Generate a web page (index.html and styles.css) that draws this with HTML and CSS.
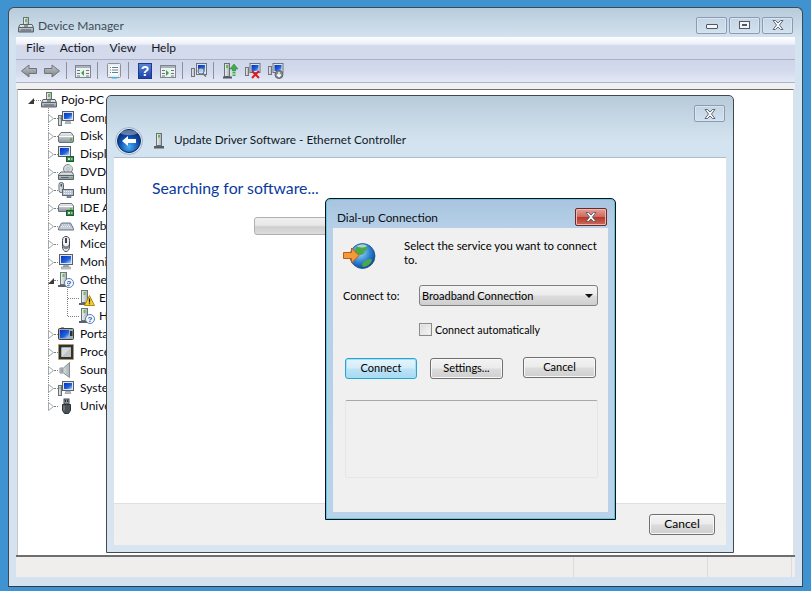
FILE: index.html
```html
<!DOCTYPE html>
<html lang="en">
<head>
<meta charset="utf-8">
<title>Device Manager</title>
<link rel="stylesheet" href="styles.css">
</head>
<body>
<svg class="defs" width="0" height="0" aria-hidden="true">
  <defs>
    <linearGradient id="gTower" x1="0" x2="1" y1="0" y2="0"><stop offset="0" stop-color="#f2f4f4"/><stop offset="1" stop-color="#a8b0b4"/></linearGradient>
    <linearGradient id="gBox" x1="0" x2="0" y1="0" y2="1"><stop offset="0" stop-color="#eef1f3"/><stop offset="1" stop-color="#8b949b"/></linearGradient>
    <linearGradient id="gScreen" x1="0" x2="1" y1="0" y2="1"><stop offset="0" stop-color="#0a2fb8"/><stop offset=".6" stop-color="#1c62e0"/><stop offset="1" stop-color="#bcd8f6"/></linearGradient>
    <linearGradient id="gArrow" x1="0" x2="0" y1="0" y2="1"><stop offset="0" stop-color="#c4c8cc"/><stop offset="1" stop-color="#7d8286"/></linearGradient>
    <linearGradient id="gHelp" x1="0" x2="0" y1="0" y2="1"><stop offset="0" stop-color="#5b86d8"/><stop offset="1" stop-color="#1c3fa4"/></linearGradient>
    <radialGradient id="gBack" cx=".5" cy=".75" r=".75"><stop offset="0" stop-color="#49b0f2"/><stop offset=".55" stop-color="#0d4fb0"/><stop offset="1" stop-color="#06275f"/></radialGradient>
    <radialGradient id="gGlobe" cx=".4" cy=".35" r=".7"><stop offset="0" stop-color="#a6d8f6"/><stop offset=".6" stop-color="#2a7fd0"/><stop offset="1" stop-color="#0d3f8c"/></radialGradient>

    <symbol id="twist-closed" viewBox="0 0 6 9"><path d="M.5.5l5 4-5 4z" fill="#fff" stroke="#a2a7ac"/></symbol>
    <symbol id="twist-opened" viewBox="0 0 6 9"><path d="M6 2v6H0z" fill="#3a3a3a"/></symbol>
    <symbol id="i-tower" viewBox="0 0 16 16"><rect x="5.500" y=".5" width="5" height="9" fill="url(#gTower)" stroke="#6a7378"/><rect x="7" y="2" width="2" height="3" fill="#6ac04a"/></symbol>
    <symbol id="i-root" viewBox="0 0 16 16"><use href="#i-tower"/><path d="M2 7.500h12l1.500 3v4.500h-15v-4.500z" fill="url(#gBox)" stroke="#59636b"/><path d="M1 10.500h14" stroke="#59636b"/><rect x="6" y="8.500" width="4" height="1" fill="#444c52"/><rect x="3" y="12.500" width="10" height="1" fill="#59636b"/></symbol>
    <symbol id="i-monitor" viewBox="0 0 16 16"><rect x="1.500" y=".5" width="13" height="10" fill="#dfe5ea" stroke="#56606a"/><rect x="3" y="2" width="10" height="7" fill="url(#gScreen)"/><path d="M6 11h4l1 2H5z" fill="#aeb6bc" stroke="#76808a" stroke-width=".5"/><rect x="3.500" y="13" width="9" height="2" fill="#c8ced3" stroke="#76808a" stroke-width=".5"/></symbol>
    <symbol id="i-computer" viewBox="0 0 16 16"><rect x=".5" y="5.500" width="3" height="10" fill="url(#gTower)" stroke="#687075"/><rect x="1.500" y="7" width="1" height="2" fill="#62b842"/><rect x="4.500" y="1.500" width="11" height="9" fill="#dfe5ea" stroke="#56606a"/><rect x="6" y="3" width="8" height="6" fill="url(#gScreen)"/><path d="M8 11h4l1 2.500H7z" fill="#b6bdc3" stroke="#76808a" stroke-width=".5"/></symbol>
    <symbol id="i-disk" viewBox="0 0 16 16"><path d="M3 4.500h10l2.500 3.500v5a1.500 1.500 0 0 1-1.500 1.500H2A1.500 1.500 0 0 1 .5 13V8z" fill="url(#gBox)" stroke="#6a737a"/><path d="M1 8.500h14" stroke="#fff"/><rect x="12" y="10" width="2" height="3" fill="#5cb53f"/></symbol>
    <symbol id="i-card" viewBox="0 0 16 16"><rect x="8.500" y="10.500" width="7" height="5" fill="#2f8a4a" stroke="#1d5a32"/><rect x="10" y="12" width="2" height="2" fill="#d8e0c8"/><rect x="13" y="12" width="1.500" height="2" fill="#a0c0a0"/></symbol>
    <symbol id="i-display" viewBox="0 0 16 16"><rect x=".5" y=".5" width="12" height="10" fill="#dfe5ea" stroke="#56606a"/><rect x="2" y="2" width="9" height="7" fill="url(#gScreen)"/><use href="#i-card"/></symbol>
    <symbol id="i-dvd" viewBox="0 0 16 16"><circle cx="10" cy="5" r="4.500" fill="#d4dce2" stroke="#7a848c"/><circle cx="10" cy="5" r="1.300" fill="#fff" stroke="#7a848c" stroke-width=".6"/><path d="M10 .5a4.500 4.500 0 0 1 4.500 4.500h-3z" fill="#bfe0c4"/><path d="M3 8h11l1.500 2.500v5H.5v-5z" fill="url(#gBox)" stroke="#59636b"/><path d="M1 11.500h14" stroke="#59636b"/><rect x="3" y="13" width="8" height="1" fill="#59636b"/><rect x="12.500" y="13" width="2" height="1" fill="#5cb53f"/></symbol>
    <symbol id="i-hid" viewBox="0 0 16 16"><rect x="1" y=".5" width="4.500" height="10" rx="2" fill="url(#gTower)" stroke="#5c666c"/><rect x="2.500" y="2" width="1.500" height="2.500" fill="#4a555c"/><rect x="4.500" y="7.500" width="11" height="6" fill="#b9c2d0" stroke="#5c666c"/><path d="M6 9.500h8M6 11.500h8" stroke="#eef1f5" stroke-dasharray="1 1"/><path d="M9 13.500h4v2.500h-4z" fill="#7c8fb0" stroke="#4c5e80" stroke-width=".5"/></symbol>
    <symbol id="i-ide" viewBox="0 0 16 16"><path d="M2.500 3.500h11l2 2.500v5.500H.5V6z" fill="url(#gBox)" stroke="#6a737a"/><path d="M1 6.500h14" stroke="#fff"/><rect x="12" y="8" width="2" height="2" fill="#5cb53f"/><use href="#i-card"/></symbol>
    <symbol id="i-keyboard" viewBox="0 0 16 16"><path d="M3.500 5h9l3 5.500v1.500H.5v-1.500z" fill="#b8c0ce" stroke="#6c7686"/><path d="M4 7h8M3 8.500h10M2.500 10h11" stroke="#f0f3f7" stroke-dasharray="1 1"/></symbol>
    <symbol id="i-mouse" viewBox="0 0 16 16"><path d="M4.500 4.500c0-3 1.500-4 3.500-4s3.500 1 3.500 4v6c0 3-1.500 5-3.500 5s-3.500-2-3.500-5z" fill="#eff1f3" stroke="#3e464c"/><path d="M7 2h2v5H7z" fill="#3e464c"/><path d="M5 8c1 3 5 3 6 0v3c-.5 3-5.500 3-6 0z" fill="#7e878e"/></symbol>
    <symbol id="i-q" viewBox="0 0 16 16"><rect x="2.500" y=".5" width="6" height="12" fill="url(#gTower)" stroke="#6a7378"/><rect x="4.500" y="2" width="2" height="3" fill="#6ac04a"/><rect x="0" y="13" width="9" height="2" fill="#59636b"/><circle cx="11" cy="11" r="4.500" fill="#f4f8fc" stroke="#5980b8"/><text x="11" y="14" class="qmark">?</text></symbol>
    <symbol id="i-warn" viewBox="0 0 16 16"><rect x="2.500" y=".5" width="6" height="12" fill="url(#gTower)" stroke="#6a7378"/><rect x="4.500" y="2" width="2" height="3" fill="#6ac04a"/><rect x="0" y="13" width="9" height="2" fill="#59636b"/><path d="M10.500 5.500l5 10h-10z" fill="#f6cf2c" stroke="#b08a10" stroke-linejoin="round"/><path d="M10.500 8.500v4M10.500 13.300v1" stroke="#222" stroke-width="1.200"/></symbol>
    <symbol id="i-portable" viewBox="0 0 16 16"><rect x=".5" y="2.500" width="15" height="11" rx="1" fill="#a5acb2" stroke="#38414a"/><rect x="2" y="4" width="9" height="8" fill="url(#gScreen)"/><rect x="12" y="5" width="2.500" height="5" fill="#2a3038"/><rect x="3" y="1.500" width="3" height="1" fill="#38414a"/></symbol>
    <symbol id="i-processor" viewBox="0 0 16 16"><rect x=".5" y=".5" width="15" height="15" fill="#2e3236" stroke="#c99a3c" stroke-dasharray="1 1"/><rect x="1" y="1" width="14" height="14" rx="1" fill="#2e3236"/><rect x="3.500" y="3.500" width="9.500" height="9.500" fill="#bfc3c6"/><path d="M3.500 3.500H13L3.500 13z" fill="#d8dbdd"/></symbol>
    <symbol id="i-sound" viewBox="0 0 16 16"><path d="M2 6h3.500L11.500.5v15L5.500 11H2z" fill="url(#gTower)" stroke="#858d93"/><path d="M2.500 6.500h3v4h-3z" fill="#9aa2a8"/></symbol>
    <symbol id="i-usb" viewBox="0 0 16 16"><rect x="6" y="1" width="5" height="5" fill="#8e959b" stroke="#40474c"/><path d="M7.500 2v2M9.500 2v2" stroke="#2e3236"/><path d="M4.500 6.500h8v6l-2 3h-4l-2-3z" fill="#4a5157" stroke="#2c3236"/><path d="M6 7.500v5" stroke="#8e959b"/></symbol>

    <symbol id="t-left" viewBox="0 0 16 16"><path d="M.5 8L8 2v3.500h7.500v5H8V14z" fill="url(#gArrow)" stroke="#707478"/></symbol>
    <symbol id="t-right" viewBox="0 0 16 16"><path d="M15.500 8L8 2v3.500H.5v5H8V14z" fill="url(#gArrow)" stroke="#707478"/></symbol>
    <symbol id="t-win-left" viewBox="0 0 16 16"><rect x=".5" y="2.500" width="15" height="12" fill="#eef1f4" stroke="#7e878e"/><rect x="1" y="3" width="14" height="2" fill="#a8b0b8"/><path d="M2 7h3v1H2zM2 10h3v1H2zM2 12.500h3v1H2zM11 7h3v1h-3zM11 10h3v1h-3zM11 12.500h3v1h-3z" fill="#6f7880"/><path d="M9 7v6l-3-3z" fill="#3da640"/></symbol>
    <symbol id="t-win-right" viewBox="0 0 16 16"><rect x=".5" y="2.500" width="15" height="12" fill="#eef1f4" stroke="#7e878e"/><rect x="1" y="3" width="14" height="2" fill="#a8b0b8"/><path d="M2 7h3v1H2zM2 10h3v1H2zM2 12.500h3v1H2zM11 7h3v1h-3zM11 10h3v1h-3zM11 12.500h3v1h-3z" fill="#6f7880"/><path d="M6 7v6l3-3z" fill="#3da640"/></symbol>
    <symbol id="t-props" viewBox="0 0 16 16"><rect x="1.500" y=".5" width="13" height="14" rx="1" fill="#f6f7f8" stroke="#8a9298"/><rect x="3" y="2" width="10" height="11" fill="#fff" stroke="#c0c6ca" stroke-width=".5"/><path d="M4 4h1v1H4zM6 4h6v1H6zM4 6.500h1v1H4zM6 6.500h6v1H6zM4 9h1v1H4zM6 9h6v1H6z" fill="#5b7f9e"/><rect x="6" y="14" width="5" height="1.500" fill="#3fb0e8"/></symbol>
    <symbol id="t-help" viewBox="0 0 14 16"><rect x=".5" y=".5" width="13" height="15" fill="url(#gHelp)" stroke="#1c3a90"/><text x="7" y="13" class="helpmark">?</text></symbol>
    <symbol id="t-scan" viewBox="0 0 16 16"><rect x=".5" y="5.500" width="3" height="8" fill="url(#gTower)" stroke="#70787e"/><rect x="5.500" y=".5" width="10" height="11" fill="#dfe5ea" stroke="#6b747c"/><rect x="7" y="2" width="7" height="7" fill="url(#gScreen)"/><circle cx="10" cy="8" r="3" fill="#cfe4f6" fill-opacity=".8" stroke="#68717a"/><path d="M12 10.500l3 3" stroke="#68717a" stroke-width="1.500"/></symbol>
    <symbol id="t-update" viewBox="0 0 16 16"><rect x="2.500" y=".5" width="5" height="13" fill="url(#gTower)" stroke="#667076"/><rect x="4" y="2" width="2" height="3" fill="#62b842"/><rect x="1" y="13.500" width="9" height="2" fill="#50595f"/><path d="M12 1l4 5h-2.500v2h-3V6H8z" fill="#41ad4a" stroke="#1f7a2a" stroke-width=".5"/><path d="M10.500 9h3v1.500h-3zM10.500 11.500h3V13h-3z" fill="#41ad4a"/></symbol>
    <symbol id="t-remove" viewBox="0 0 16 16"><rect x=".5" y="4.500" width="3" height="8" fill="url(#gTower)" stroke="#70787e"/><rect x="5" y=".5" width="10" height="9" fill="#dfe5ea" stroke="#6b747c"/><rect x="6.500" y="2" width="7" height="6" fill="url(#gScreen)"/><path d="M7 8l7 7M14 8l-7 7" stroke="#d81e1e" stroke-width="2"/></symbol>
    <symbol id="t-add" viewBox="0 0 16 16"><rect x=".5" y="3.500" width="3" height="8" fill="url(#gTower)" stroke="#70787e"/><rect x="5" y=".5" width="10" height="9" fill="#dfe5ea" stroke="#6b747c"/><rect x="6.500" y="2" width="7" height="6" fill="url(#gScreen)"/><circle cx="11" cy="11.500" r="4" fill="#868d93" stroke="#5c6368"/><path d="M11 9v4M9 11.500l2 2 2-2" stroke="#fff" stroke-width="1.300" fill="none"/></symbol>
    <symbol id="x-glyph" viewBox="0 0 12 10"><path d="M1 .5h2.500L6 3l2.500-2.500H11L7.500 5 11 9.500H8.500L6 7 3.500 9.500H1L4.500 5z" fill="#f5f6f8" stroke="#545d6c" stroke-width=".9"/></symbol>
  </defs>
</svg>

<main class="window main-window">
  <header class="titlebar">
    <svg class="ico"><use href="#i-root"/></svg>
    <span class="title-text">Device Manager</span>
    <div class="caption">
      <span class="cap-btn"><span class="cap-min"></span></span>
      <span class="cap-btn"><span class="cap-max"></span></span>
      <span class="cap-btn"><svg class="cap-x"><use href="#x-glyph"/></svg></span>
    </div>
  </header>
  <div class="client">
    <nav class="menubar">
      <span class="menu-item">File</span>
      <span class="menu-item">Action</span>
      <span class="menu-item">View</span>
      <span class="menu-item">Help</span>
    </nav>
    <div class="toolbar">
      <svg class="tool"><use href="#t-left"/></svg>
      <svg class="tool"><use href="#t-right"/></svg>
      <span class="tsep"></span>
      <svg class="tool"><use href="#t-win-left"/></svg>
      <span class="tsep"></span>
      <svg class="tool"><use href="#t-props"/></svg>
      <span class="tsep"></span>
      <svg class="tool tool-help"><use href="#t-help"/></svg>
      <svg class="tool"><use href="#t-win-right"/></svg>
      <span class="tsep"></span>
      <svg class="tool"><use href="#t-scan"/></svg>
      <span class="tsep"></span>
      <svg class="tool"><use href="#t-update"/></svg>
      <svg class="tool"><use href="#t-remove"/></svg>
      <svg class="tool"><use href="#t-add"/></svg>
    </div>
    <div class="strip"></div>
    <section class="tree">
      <div class="row row-root"><svg class="twist"><use href="#twist-opened"/></svg><span class="dots"></span><svg class="ico"><use href="#i-root"/></svg><span class="label">Pojo-PC</span></div>
      <div class="branch">
        <div class="row"><svg class="twist"><use href="#twist-closed"/></svg><span class="dots"></span><svg class="ico"><use href="#i-computer"/></svg><span class="label">Computer</span></div>
        <div class="row"><svg class="twist"><use href="#twist-closed"/></svg><span class="dots"></span><svg class="ico"><use href="#i-disk"/></svg><span class="label">Disk drives</span></div>
        <div class="row"><svg class="twist"><use href="#twist-closed"/></svg><span class="dots"></span><svg class="ico"><use href="#i-display"/></svg><span class="label">Display adapters</span></div>
        <div class="row"><svg class="twist"><use href="#twist-closed"/></svg><span class="dots"></span><svg class="ico"><use href="#i-dvd"/></svg><span class="label">DVD/CD-ROM drives</span></div>
        <div class="row"><svg class="twist"><use href="#twist-closed"/></svg><span class="dots"></span><svg class="ico"><use href="#i-hid"/></svg><span class="label">Human Interface Devices</span></div>
        <div class="row"><svg class="twist"><use href="#twist-closed"/></svg><span class="dots"></span><svg class="ico"><use href="#i-ide"/></svg><span class="label">IDE ATA/ATAPI controllers</span></div>
        <div class="row"><svg class="twist"><use href="#twist-closed"/></svg><span class="dots"></span><svg class="ico"><use href="#i-keyboard"/></svg><span class="label">Keyboards</span></div>
        <div class="row"><svg class="twist"><use href="#twist-closed"/></svg><span class="dots"></span><svg class="ico"><use href="#i-mouse"/></svg><span class="label">Mice and other pointing devices</span></div>
        <div class="row"><svg class="twist"><use href="#twist-closed"/></svg><span class="dots"></span><svg class="ico"><use href="#i-monitor"/></svg><span class="label">Monitors</span></div>
        <div class="row"><svg class="twist"><use href="#twist-opened"/></svg><span class="dots"></span><svg class="ico"><use href="#i-q"/></svg><span class="label">Other devices</span></div>
        <div class="sub-branch">
          <div class="row row-sub"><span class="dots-long"></span><svg class="ico"><use href="#i-warn"/></svg><span class="label">Ethernet Controller</span></div>
          <div class="row row-sub"><span class="dots-long"></span><svg class="ico"><use href="#i-q"/></svg><span class="label">HID Device</span></div>
        </div>
        <div class="row"><svg class="twist"><use href="#twist-closed"/></svg><span class="dots"></span><svg class="ico"><use href="#i-portable"/></svg><span class="label">Portable Devices</span></div>
        <div class="row"><svg class="twist"><use href="#twist-closed"/></svg><span class="dots"></span><svg class="ico"><use href="#i-processor"/></svg><span class="label">Processors</span></div>
        <div class="row"><svg class="twist"><use href="#twist-closed"/></svg><span class="dots"></span><svg class="ico"><use href="#i-sound"/></svg><span class="label">Sound, video and game controllers</span></div>
        <div class="row"><svg class="twist"><use href="#twist-closed"/></svg><span class="dots"></span><svg class="ico"><use href="#i-computer"/></svg><span class="label">System devices</span></div>
        <div class="row"><svg class="twist"><use href="#twist-closed"/></svg><span class="dots"></span><svg class="ico"><use href="#i-usb"/></svg><span class="label">Universal Serial Bus controllers</span></div>
      </div>
    </section>
    <footer class="statusbar">
      <span class="status-cell status-main"></span>
      <span class="status-cell status-mid"></span>
      <span class="status-cell status-end"></span>
    </footer>
  </div>
</main>

<section class="window wizard">
  <div class="wizard-frame">
    <span class="cap-btn wizard-close"><svg class="cap-x"><use href="#x-glyph"/></svg></span>
    <div class="wizard-head">
      <svg class="back-btn" viewBox="0 0 28 28"><circle cx="14" cy="14" r="13.500" fill="#dfe8f2" stroke="#9eb2c8"/><circle cx="14" cy="14" r="11.500" fill="url(#gBack)" stroke="#0a2c66"/><path d="M5 6a11 7 0 0 1 18 0c-4 3-14 3-18 0z" fill="#fff" fill-opacity=".35"/><path d="M7 14l6-5v3h8v4h-8v3z" fill="#fff"/></svg>
      <svg class="head-ico" viewBox="0 0 10 16"><rect x="2.500" y=".5" width="5" height="12" fill="url(#gTower)" stroke="#667076"/><rect x="4" y="2" width="2" height="2.500" fill="#62b842"/><rect x="0" y="13" width="10" height="2.500" fill="#565f65"/></svg>
      <span class="wizard-title">Update Driver Software - Ethernet Controller</span>
    </div>
  </div>
  <div class="wizard-client">
    <div class="wizard-body">
      <h1 class="searching">Searching for software...</h1>
      <div class="progress"></div>
    </div>
    <div class="wizard-foot">
      <button class="btn btn-foot" type="button">Cancel</button>
    </div>
  </div>
</section>

<section class="window dialup">
  <header class="dialup-title">
    <span class="dialup-name">Dial-up Connection</span>
    <span class="close-red"><svg class="cap-x"><use href="#x-glyph"/></svg></span>
  </header>
  <div class="dialup-client">
    <div class="intro">
      <svg class="globe" viewBox="0 0 34 26"><circle cx="19.500" cy="13" r="12.500" fill="url(#gGlobe)" stroke="#1f4f90" stroke-width=".8"/><path d="M12 6c3-4 10-5 12-2 1 3-2 3-3 6-2 3-5 1-6 3-3 0-4-4-3-7zM22 18c2-2 6-3 7-1-1 4-5 7-9 7-2-2 0-5 2-6z" fill="#49a84a"/><path d="M14 3c4-2 8-2 10 0-3 2-7 2-10 0z" fill="#fff" fill-opacity=".55"/><path d="M.5 9.500h8V5l7.500 7.500L8.500 20v-4.500h-8z" fill="#f29a3a" stroke="#b65f12"/></svg>
      <p class="intro-text">Select the service you want to connect to.</p>
    </div>
    <div class="field">
      <label class="field-label">Connect to:</label>
      <div class="select"><span>Broadband Connection</span><span class="caret"></span></div>
    </div>
    <div class="check-row">
      <span class="checkbox"></span>
      <span class="check-label">Connect automatically</span>
    </div>
    <div class="actions">
      <button class="btn btn-default" type="button">Connect</button>
      <button class="btn btn-settings" type="button">Settings...</button>
      <button class="btn btn-cancel" type="button">Cancel</button>
    </div>
    <div class="groupbox"></div>
  </div>
</section>
</body>
</html>
```

FILE: styles.css
```css
* { box-sizing: border-box; }
html, body { margin: 0; height: 100%; }
body {
  background: #3f93d1;
  overflow: hidden;
  position: relative;
  font-family: "Lato", "Open Sans", sans-serif;
  font-size: 12px;
  color: #000;
}
.defs { position: absolute; }
.qmark { font: bold 8px "Liberation Sans", sans-serif; fill: #2a5aa8; text-anchor: middle; }
.helpmark { font: bold 14px "Liberation Sans", sans-serif; fill: #fff; text-anchor: middle; }
.ico { width: 16px; height: 16px; flex: none; }

.window { position: absolute; }

/* main window */
.main-window {
  left: 8px; top: 7px; width: 795px; height: 580px;
  display: flex; flex-direction: column;
  background: linear-gradient(#b8cbd9 0, #d4e3f0 30px, #d5e3f0 100%);
  border: 1px solid #3c4a58;
  border-bottom-color: #2f3b47;
  border-radius: 6px 6px 0 0;
}
.titlebar {
  height: 29px; flex: none;
  display: flex; align-items: center;
  padding: 5px 9px 0 9px;
}
.title-text { margin-left: 4px; font-size: 12px; color: #3e4c58; }
.caption { margin-left: auto; display: flex; gap: 2px; }
.cap-btn {
  width: 31px; height: 17px;
  display: flex; align-items: center; justify-content: center;
  border: 1px solid #8b9bb5;
  border-radius: 2px;
  background: linear-gradient(#c4d5e4, #d3e1ee);
  box-shadow: inset 0 0 0 1px #d9e4ee;
}
.cap-min { width: 12px; height: 5px; margin-top: 3px; background: #f4f5f7; border: 1px solid #4e5766; border-radius: 1px; }
.cap-max { width: 11px; height: 8px; border: 1px solid #4e5766; background: #f4f5f7; box-shadow: inset 0 0 0 2px #f4f5f7, inset 0 0 0 3px #4e5766; }
.cap-x { width: 12px; height: 10px; }

.client {
  flex: 1; min-height: 0;
  margin: 0 7px 9px 7px;
  display: flex; flex-direction: column;
}
.menubar {
  height: 23px; flex: none;
  display: flex; align-items: center;
  padding: 0 0 2px 10px;
  gap: 15px;
  background: linear-gradient(#fdfeff 0, #eef1f8 30%, #d3daec 40%, #d3daec 100%);
  border-bottom: 1px solid #a9b1c4;
}
.menu-item { color: #16181e; }
.toolbar {
  height: 23px; flex: none;
  display: flex; align-items: center;
  padding: 0 0 1px 5px;
  background: linear-gradient(#cfd6ea, #d3daec 50%, #e4e9f6);
  border-bottom: 1px solid #aeb5c8;
}
.tool { width: 16px; height: 16px; flex: none; margin-right: 7px; }
.tool-help { width: 14px; margin-left: 1px; margin-right: 8px; }
.tsep { width: 1px; height: 17px; background: #8a909c; margin: 0 8px 0 -1px; flex: none; }
.strip { height: 6px; flex: none; background: #f0f0f0; }
.tree {
  flex: 1; min-height: 0;
  margin: 0 1px;
  background: #fff;
  border-top: 1px solid #6e6e6e;
  border-right: 1px solid #e0e0e0;
  border-left: 1px solid #c8c8c8;
  padding-top: 1px;
  overflow: hidden;
}
.row { height: 18px; display: flex; align-items: center; padding-left: 30px; white-space: nowrap; }
.row .label { margin-left: 6px; color: #0a0a14; position: relative; top: -1px; }
.row-root { padding-left: 10px; }
.row-root .label { margin-left: 4px; }
.row-sub { padding-left: 50px; }
.row-sub .label { margin-left: 4px; }
.twist { width: 6px; height: 9px; flex: none; position: relative; z-index: 1; }
.dots { width: 4px; flex: none; border-top: 1px dotted #808080; }
.row-root .dots { width: 7px; }
.dots-long { width: 11px; flex: none; border-top: 1px dotted #808080; }
.branch { position: relative; }
.branch::before {
  content: ""; position: absolute; left: 30px; top: -4px; height: 300px;
  border-left: 1px dotted #808080;
}
.sub-branch { position: relative; }
.sub-branch::before {
  content: ""; position: absolute; left: 49px; top: -6px; height: 33px;
  border-left: 1px dotted #808080;
}
.statusbar {
  height: 22px; flex: none;
  display: flex;
  background: #f0eded;
  border-top: 2px solid #6e6e6e;
}
.status-cell { border-right: 1px solid #dcdcdc; display: block; }
.status-main { width: 558px; }
.status-mid { width: 134px; }
.status-end { width: 84px; }

/* wizard */
.wizard {
  left: 106px; top: 95px; width: 628px; height: 458px;
  display: flex; flex-direction: column;
  background: linear-gradient(#b8cbd9 0, #d4e3f0 45px, #d8e4f0 100%);
  border: 1px solid #3f4a55;
  border-radius: 5px 5px 0 0;
  padding: 0 7px 7px 7px;
}
.wizard-frame { height: 61px; flex: none; position: relative; }
.wizard-close { position: absolute; right: 1px; top: 9px; }
.wizard-head { display: flex; align-items: center; padding-top: 28px; height: 61px; }
.back-btn { width: 28px; height: 28px; margin-left: 1px; flex: none; }
.head-ico { width: 10px; height: 16px; margin-left: 11px; flex: none; }
.wizard-title { margin-left: 10px; font-size: 11.75px; color: #11181f; position: relative; top: -1px; }
.wizard-client {
  flex: 1; min-height: 0;
  display: flex; flex-direction: column;
  background: #fff;
  border-top: 1px solid #aebcd0;
}
.wizard-body { flex: 1; padding: 20px 0 0 38px; }
.searching { margin: 0; font-size: 15.8px; line-height: 20px; font-weight: 400; color: #0a3a9e; }
.progress {
  width: 326px; height: 18px; margin: 19px 0 0 102px;
  border: 1px solid #b0b0b0; border-radius: 3px;
  background: linear-gradient(#f0f0f0, #e8e8e8 45%, #cfcfcf 55%, #dcdcdc);
}
.wizard-foot {
  height: 42px; flex: none;
  display: flex; justify-content: flex-end; align-items: flex-start;
  padding: 10px 11px 0 0;
  background: #f0f0f0;
  border-top: 1px solid #dfdfdf;
}
.btn {
  font: inherit; color: #000;
  height: 21px; padding: 0 0 2px;
  border: 1px solid #707070; border-radius: 3px;
  background: linear-gradient(#f3f3f3, #ebebeb 48%, #dcdcdc 52%, #cfcfcf);
  box-shadow: inset 0 0 0 1px #f8f8f8;
}
.btn-foot { width: 66px; }

/* dial-up */
.dialup {
  left: 325px; top: 198px; width: 291px; height: 322px;
  display: flex; flex-direction: column;
  background: linear-gradient(#a8c4de 0, #b6d0e8 30px, #b8d2ea 100%);
  border: 1px solid #111;
  border-radius: 5px 5px 0 0;
  box-shadow: inset 0 0 0 1px #5cc8e8;
  padding: 0 7px 7px 7px;
}
.dialup-title { height: 29px; flex: none; display: flex; align-items: center; padding-top: 8px; position: relative; }
.dialup-name { margin-left: 4px; color: #0c1014; font-size: 11.8px; }
.close-red {
  position: absolute; right: 1px; top: 9px;
  width: 32px; height: 18px;
  display: flex; align-items: center; justify-content: center;
  border: 1px solid #6e2a22; border-radius: 2px;
  background: linear-gradient(#e2a09a, #d06a5e 48%, #b8362a 52%, #cc6a5c);
  box-shadow: inset 0 0 0 1px #e8b8b0;
}
.dialup-client { flex: 1; min-height: 0; background: #f0f0f0; padding: 11px 10px 0 10px; font-size: 11px; }
.intro { display: flex; align-items: flex-start; }
.globe { width: 34px; height: 26px; margin-top: 4px; flex: none; }
.intro-text { margin: 0 0 0 27px; width: 195px; line-height: 14px; font-size: 11.4px; }
.field { display: flex; align-items: center; margin-top: 16px; }
.field-label { width: 76px; }
.select {
  width: 179px; height: 21px;
  display: flex; align-items: center; justify-content: space-between;
  padding: 0 3px 0 2px;
  border: 1px solid #808080; border-radius: 3px;
  background: linear-gradient(#f4f4f4, #ebebeb 48%, #dcdcdc 52%, #cfcfcf);
}
.caret { width: 0; height: 0; border: 4px solid transparent; border-top: 4px solid #111; border-bottom: 0; margin-right: 1px; }
.check-row { display: flex; align-items: center; margin: 16px 0 0 76px; height: 14px; }
.checkbox { width: 13px; height: 13px; border: 1px solid #8a8a8a; background: linear-gradient(135deg, #d8d8d8, #f8f8f8); box-shadow: inset 0 0 0 1px #e8e8e8; }
.check-label { margin-left: 3px; font-size: 10.7px; }
.actions { display: flex; align-items: flex-start; margin: 22px 0 0 2px; font-size: 11px; }
.btn-default {
  width: 72px;
  border-color: #2aa3d0;
  background: linear-gradient(#e6f4fc, #d4ecf9 48%, #bde3f6 52%, #a9d9f1);
  box-shadow: inset 0 0 0 1px #9fe2f8;
}
.btn-settings { width: 73px; margin-left: 13px; }
.btn-cancel { width: 73px; margin: -1px 0 0 20px; }
.groupbox {
  width: 253px; height: 78px;
  margin: 21px 0 0 2px;
  border: 1px solid #e6e6ea;
  border-top-color: #a8a8a8;
  border-radius: 2px;
}
```
